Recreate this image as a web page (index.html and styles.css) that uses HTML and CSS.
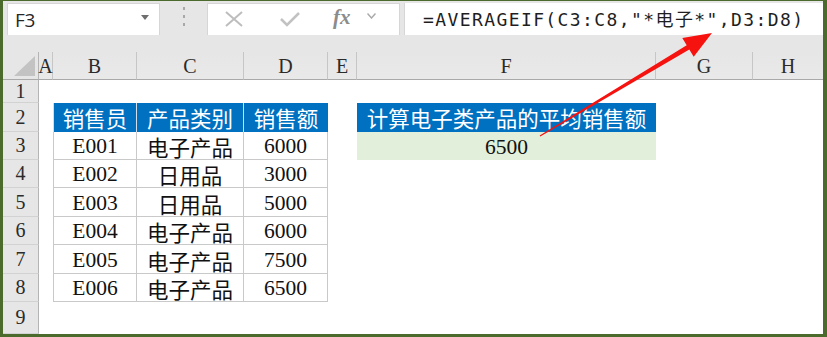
FILE: index.html
```html
<!DOCTYPE html>
<html lang="zh-CN">
<head>
<meta charset="utf-8">
<title>AVERAGEIF</title>
<link rel="stylesheet" href="styles.css">
</head>
<body>
<div class="frame">
  <div class="toolbar">
    <div class="namebox">
      <span class="cellref">F3</span>
      <svg class="caret" width="8" height="5" viewBox="0 0 8 5"><path d="M0 0H8L4 5Z" fill="#6e6e6e"/></svg>
    </div>
    <div class="grip">
      <svg width="4" height="20" viewBox="0 0 4 20"><rect x="1" y="0" width="2" height="3" fill="#a8a8a8"/><rect x="1" y="8" width="2" height="3" fill="#a8a8a8"/><rect x="1" y="16" width="2" height="3" fill="#a8a8a8"/></svg>
    </div>
    <div class="fxbox">
      <svg class="ico-x" width="18" height="16" viewBox="0 0 18 16"><path d="M1 1L17 15M17 1L1 15" stroke="#bdbdbd" stroke-width="2" fill="none"/></svg>
      <svg class="ico-ok" width="20" height="15" viewBox="0 0 20 15"><path d="M1 7L7 13L19 1" stroke="#c2c2c2" stroke-width="2.6" fill="none"/></svg>
      <span class="fx">fx</span>
      <svg class="ico-dd" width="9" height="6" viewBox="0 0 9 6"><path d="M0.5 0.5L4.5 5L8.5 0.5" stroke="#a8a8a8" stroke-width="1.4" fill="none"/></svg>
    </div>
    <div class="formula">=AVERAGEIF(C3:C8,"*电子*",D3:D8)</div>
  </div>
  <div class="spacer"></div>
  <div class="sheet">
    <div class="corner"><svg width="21" height="20" viewBox="0 0 21 20"><path d="M21 0V20H0Z" fill="#c3c3c3"/></svg></div>
    <div class="ch">A</div><div class="ch">B</div><div class="ch">C</div><div class="ch">D</div><div class="ch">E</div><div class="ch">F</div><div class="ch">G</div><div class="ch last">H</div>

    <div class="rh">1</div><div class="c"></div><div class="c"></div><div class="c"></div><div class="c"></div><div class="c"></div><div class="c"></div><div class="c"></div><div class="c"></div>

    <div class="rh">2</div><div class="c"></div><div class="th first">销售员</div><div class="th">产品类别</div><div class="th lastcol">销售额</div><div class="c"></div><div class="th single">计算电子类产品的平均销售额</div><div class="c"></div><div class="c"></div>

    <div class="rh">3</div><div class="c"></div><div class="td first">E001</div><div class="td">电子产品</div><div class="td">6000</div><div class="c"></div><div class="res">6500</div><div class="c"></div><div class="c"></div>

    <div class="rh">4</div><div class="c"></div><div class="td first">E002</div><div class="td">日用品</div><div class="td">3000</div><div class="c"></div><div class="c"></div><div class="c"></div><div class="c"></div>

    <div class="rh">5</div><div class="c"></div><div class="td first">E003</div><div class="td">日用品</div><div class="td">5000</div><div class="c"></div><div class="c"></div><div class="c"></div><div class="c"></div>

    <div class="rh">6</div><div class="c"></div><div class="td first">E004</div><div class="td">电子产品</div><div class="td">6000</div><div class="c"></div><div class="c"></div><div class="c"></div><div class="c"></div>

    <div class="rh">7</div><div class="c"></div><div class="td first">E005</div><div class="td">电子产品</div><div class="td">7500</div><div class="c"></div><div class="c"></div><div class="c"></div><div class="c"></div>

    <div class="rh">8</div><div class="c"></div><div class="td first">E006</div><div class="td">电子产品</div><div class="td">6500</div><div class="c"></div><div class="c"></div><div class="c"></div><div class="c"></div>

    <div class="rh">9</div><div class="c"></div><div class="c"></div><div class="c"></div><div class="c"></div><div class="c"></div><div class="c"></div><div class="c"></div><div class="c"></div>
  </div>
  <svg class="arrow" width="827" height="337" viewBox="0 0 827 337">
    <polygon points="539.7,135.6 686.7,45.3 682.3,38 712,33 693.7,56.8 689.3,49.5 540.3,136.4" fill="#f5120f"/>
  </svg>
</div>
</body>
</html>
```

FILE: styles.css
```css
body {
  margin: 0;
  background: #ffffff;
}

.frame {
  position: relative;
  width: 827px;
  height: 337px;
  box-sizing: border-box;
  border-style: solid;
  border-color: #4a6b2c;
  border-width: 1px 4px 3px 3px;
  background: #e6e6e6;
  overflow: hidden;
}

.toolbar {
  display: flex;
  align-items: stretch;
  height: 34px;
  padding: 2px 0 0 4px;
  box-sizing: border-box;
}

.namebox {
  width: 153px;
  background: #ffffff;
  border: 1px solid #d6d6d6;
  border-bottom: none;
  box-sizing: border-box;
  display: flex;
  align-items: center;
  justify-content: space-between;
  padding: 0 10px 0 7px;
}

.cellref {
  font-family: "Open Sans", "Liberation Sans", sans-serif;
  font-size: 19px;
  color: #262626;
  letter-spacing: -0.3px;
}

.caret {
  margin-top: -4px;
}

.grip {
  width: 47px;
  display: flex;
  align-items: center;
  justify-content: center;
  padding-bottom: 4px;
  box-sizing: border-box;
}

.fxbox {
  width: 193px;
  background: #ffffff;
  border: 1px solid #d6d6d6;
  border-bottom: none;
  box-sizing: border-box;
  display: flex;
  align-items: center;
  padding: 0 0 0 17px;
}

.ico-x {
  margin-top: -2px;
}

.ico-ok {
  margin-left: 37px;
  margin-top: -1px;
}

.fx {
  margin-left: 33px;
  font-family: "Liberation Serif", serif;
  font-style: italic;
  font-weight: bold;
  font-size: 21px;
  color: #8c8c8c;
  margin-top: -4px;
}

.ico-dd {
  margin-left: 16px;
  margin-top: -8px;
}

.formula {
  margin-left: 4px;
  flex: 1;
  background: #ffffff;
  border-left: 1px solid #d6d6d6;
  display: flex;
  align-items: center;
  padding-left: 18px;
  padding-bottom: 2px;
  box-sizing: border-box;
  font-family: "DejaVu Sans Mono", "Noto Sans CJK SC", monospace;
  font-size: 18px;
  letter-spacing: 1.4px;
  color: #1e1e1e;
  white-space: nowrap;
}

.spacer {
  height: 17px;
}

.sheet {
  display: grid;
  grid-template-columns: 36px 14px 84px 107px 84px 29px 299px 97px 70px;
  grid-template-rows: 28px 23px 29px 28px 28px 29px 28px 29px 28px 32px;
  font-family: "Liberation Serif", "Noto Sans CJK SC", serif;
}

.corner {
  border-right: 1px solid #b4b4b4;
  border-bottom: 1px solid #a9a9a9;
  display: flex;
  align-items: flex-end;
  justify-content: flex-end;
  padding: 0 3px 3px 0;
}

.ch {
  border-right: 1px solid #c6c6c6;
  border-bottom: 1px solid #a9a9a9;
  display: flex;
  align-items: center;
  justify-content: center;
  font-size: 20px;
  color: #2b2b2b;
  padding-top: 2px;
  background: linear-gradient(#e6e6e6, #e9e9e9);
}

.ch.last {
  border-right: none;
}

.rh {
  background: #e6e6e6;
  border-right: 1px solid #b4b4b4;
  border-bottom: 1px solid #d2d2d2;
  display: flex;
  align-items: center;
  justify-content: center;
  font-size: 20px;
  color: #2b2b2b;
}

.c {
  background: #ffffff;
}

.th {
  background: #0070c0;
  color: #ffffff;
  border-right: 1px solid #d4dde8;
  display: flex;
  align-items: center;
  justify-content: center;
  font-size: 21.5px;
  white-space: nowrap;
}

.th.first {
  border-left: 1px solid #d4dde8;
}

.th.lastcol {
  border-right: none;
}

.th.single {
  border: none;
  overflow: visible;
}

.td {
  background: #ffffff;
  color: #111111;
  border-right: 1px solid #c9c9c9;
  border-bottom: 1px solid #c9c9c9;
  display: flex;
  align-items: center;
  justify-content: center;
  font-size: 21.5px;
  padding-top: 2px;
  white-space: nowrap;
}

.td.first {
  border-left: 1px solid #c9c9c9;
}

.res {
  background: #e2efda;
  color: #111111;
  display: flex;
  align-items: center;
  justify-content: center;
  font-size: 21.5px;
  padding-top: 2px;
}

.arrow {
  position: absolute;
  left: -3px;
  top: -1px;
  pointer-events: none;
}
```
